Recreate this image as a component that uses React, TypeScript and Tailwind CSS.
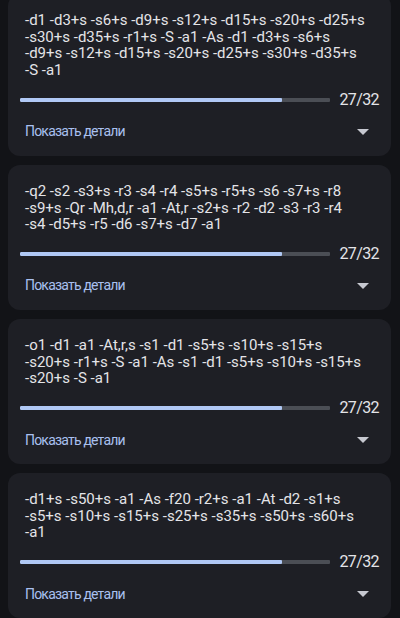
import { useState } from 'react'

interface Item {
  id: number
  lines: string[]
  done: number
  total: number
}

const items: Item[] = [
  {
    id: 1,
    lines: [
      '-d1 -d3+s -s6+s -d9+s -s12+s -d15+s -s20+s -d25+s',
      '-s30+s -d35+s -r1+s -S -a1 -As -d1 -d3+s -s6+s',
      '-d9+s -s12+s -d15+s -s20+s -d25+s -s30+s -d35+s',
      '-S -a1',
    ],
    done: 27,
    total: 32,
  },
  {
    id: 2,
    lines: [
      '-q2 -s2 -s3+s -r3 -s4 -r4 -s5+s -r5+s -s6 -s7+s -r8',
      '-s9+s -Qr -Mh,d,r -a1 -At,r -s2+s -r2 -d2 -s3 -r3 -r4',
      '-s4 -d5+s -r5 -d6 -s7+s -d7 -a1',
    ],
    done: 27,
    total: 32,
  },
  {
    id: 3,
    lines: [
      '-o1 -d1 -a1 -At,r,s -s1 -d1 -s5+s -s10+s -s15+s',
      '-s20+s -r1+s -S -a1 -As -s1 -d1 -s5+s -s10+s -s15+s',
      '-s20+s -S -a1',
    ],
    done: 27,
    total: 32,
  },
  {
    id: 4,
    lines: [
      '-d1+s -s50+s -a1 -As -f20 -r2+s -a1 -At -d2 -s1+s',
      '-s5+s -s10+s -s15+s -s25+s -s35+s -s50+s -s60+s',
      '-a1',
    ],
    done: 27,
    total: 32,
  },
]

function ProgressCard({ item }: { item: Item }) {
  const [open, setOpen] = useState(false)
  const pct = (item.done / item.total) * 100

  return (
    <div className="bg-[#1e1f25] rounded-[12px] px-3 pt-[18px] pb-[2px]">
      <div className="pl-[5px] text-[15px] leading-[16.7px] text-[#e4e4e8]">
        {item.lines.map((line, i) => {
          const tokens = line.split(' ')
          return (
            <p key={i} className="whitespace-nowrap">
              {tokens.map((t, j) => (
                <span key={j}>
                  <span>{t}</span>
                  {j < tokens.length - 1 ? ' ' : ''}
                </span>
              ))}
            </p>
          )
        })}
      </div>

      {/* Progress */}
      <div className="flex items-center gap-[9px] h-5 mt-[11px]">
        <div className="flex-1 h-[4px] bg-[#4b4e55] rounded-[1px] overflow-hidden">
          <div className="h-full bg-[#b0c8f5] rounded-[1px]" style={{ width: `${pct}%` }} />
        </div>
        <span className="text-[16px] tracking-[-0.6px] text-[#e4e4e8]">
          {item.done}/{item.total}
        </span>
      </div>

      {/* Details toggle */}
      <button
        onClick={() => setOpen(!open)}
        className="w-full h-[44px] flex items-center justify-between pl-[5px] pr-[10px]"
      >
        <span className="text-[14px] tracking-[-0.8px] text-[#a9c0ef]">Показать детали</span>
        <svg width="12" height="6" viewBox="0 0 12 6" className={open ? 'rotate-180' : ''}>
          <path d="M0 0 L12 0 L6 6 Z" fill="#c6c8d0" />
        </svg>
      </button>
    </div>
  )
}

export default function App() {
  return (
    <div className="h-[618px] overflow-hidden bg-[#121317] [font-family:Roboto,sans-serif]">
      <div className="flex flex-col gap-[9px] pl-2 pr-[9px] -mt-[6px]">
        {items.map(item => (
          <ProgressCard key={item.id} item={item} />
        ))}
      </div>
    </div>
  )
}
